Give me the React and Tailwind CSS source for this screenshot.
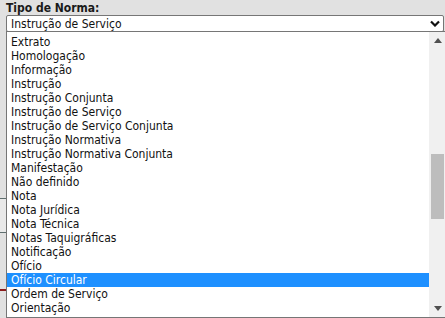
import React from "react";

const options = [
  "Extrato",
  "Homologação",
  "Informação",
  "Instrução",
  "Instrução Conjunta",
  "Instrução de Serviço",
  "Instrução de Serviço Conjunta",
  "Instrução Normativa",
  "Instrução Normativa Conjunta",
  "Manifestação",
  "Não definido",
  "Nota",
  "Nota Jurídica",
  "Nota Técnica",
  "Notas Taquigráficas",
  "Notificação",
  "Ofício",
  "Ofício Circular",
  "Ordem de Serviço",
  "Orientação",
];

const highlighted = "Ofício Circular";

const App = () => {
  return (
    <div className="relative w-[445px] h-[318px] overflow-hidden bg-[#e1e1e1] font-['DejaVu_Sans_Condensed','DejaVu_Sans',sans-serif] text-[12px] text-[#111]">
      {/* Field label + closed select */}
      <div className="pl-[6px] pt-[1px] h-[15px] leading-[14px] font-bold text-[#1a1a1a]">
        Tipo de Norma:
      </div>
      <div className="ml-[6px] mr-[1px] h-[17px] flex items-center justify-between bg-white border border-[#767676] rounded-[2px] pl-[4px] pr-[3px]">
        <span className="leading-[14px]">Instrução de Serviço</span>
        <svg width="10" height="7" viewBox="0 0 10 7">
          <path d="M1 1.5 L5 5.5 L9 1.5" fill="none" stroke="#111" strokeWidth="2.2" />
        </svg>
      </div>

      {/* Page content behind the open list */}
      <div className="mt-[166px] h-[35px] border-y border-[#5f6f6f] bg-[#e9e9e9]" />
      <div className="mt-[56px] h-[2px] bg-[#8b1c1c]" />

      {/* Open dropdown list */}
      <div className="absolute left-[6px] top-[31px] w-[441px] h-[287px] flex bg-white border border-[#767676]">
        <div className="flex-1 pt-[3px]">
          {options.map((opt) => (
            <div
              key={opt}
              className={
                opt === highlighted
                  ? "h-[14px] leading-[14px] pl-[4px] bg-[#1e90ff] text-white"
                  : "h-[14px] leading-[14px] pl-[4px]"
              }
            >
              {opt}
            </div>
          ))}
        </div>

        {/* Scrollbar */}
        <div className="w-[17px] bg-[#f0f0f0] flex flex-col items-center">
          <div className="h-[17px] w-full flex items-center justify-center">
            <svg width="8" height="5" viewBox="0 0 8 5">
              <path d="M0 5 L4 0 L8 5 Z" fill="#505050" />
            </svg>
          </div>
          <div className="h-[105px]" />
          <div className="w-[13px] h-[65px] bg-[#bdbdbd]" />
          <div className="flex-1" />
          <div className="h-[17px] w-full flex items-center justify-center">
            <svg width="8" height="5" viewBox="0 0 8 5">
              <path d="M0 0 L8 0 L4 5 Z" fill="#505050" />
            </svg>
          </div>
        </div>
      </div>
    </div>
  );
};

export default App;
